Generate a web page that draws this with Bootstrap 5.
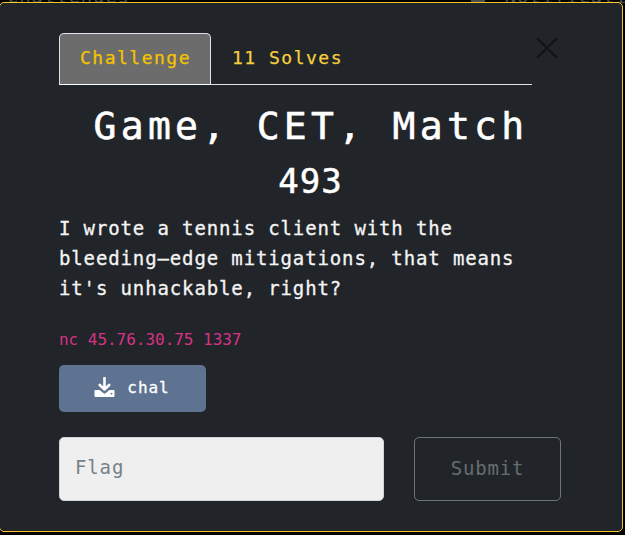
<!DOCTYPE html>
<html lang="en" data-bs-theme="dark">
<head>
<meta charset="utf-8">
<title>Game, CET, Match</title>
<link href="https://cdn.jsdelivr.net/npm/bootstrap@5.3.0/dist/css/bootstrap.min.css" rel="stylesheet">
<style>
html, body { height: 535px; overflow: hidden; }
body { background: #000; font-family: "DejaVu Sans Mono", "Liberation Mono", monospace; font-size: 19px; letter-spacing: .84px; color: #fff; }
.backdrop-text { left: 7px; right: 0; top: -12px; height: 16px; font-size: 19px; line-height: 16px; color: #4c4c4c; overflow: hidden; white-space: nowrap; z-index: -1; }
.backdrop-text .bell { width: 14px; height: 4px; margin: 10px 20px 0 341px; background: #4c4c4c; }
.challenge-panel { width: 624px; height: 530px; margin: 2px 0 0 -1px; background: #212529; border: 1px solid #f5c827; border-radius: 5px; padding: 30px 61px 0 59px; }
.tab-strip { width: 473px; height: 52px; border-bottom: 1px solid #dee2e6; }
.tab-strip .nav-link { height: 52px; padding: 0 20px; line-height: 48px; font-size: 18px; letter-spacing: 1.5px; color: #f5ce3e; border-radius: 5px 5px 0 0; -webkit-text-stroke: .25px; }
.tab-strip .nav-link.active { width: 152px; color: #f5c400; background: #6c6c6c; border-color: #dee2e6 #dee2e6 #fff; }
.close-x { margin: 4px 0 0 4px; width: 22px; height: 22px; }
.title { font-size: 38px; line-height: 48px; letter-spacing: 4.3px; margin: 17px 0 0 2px; white-space: nowrap; -webkit-text-stroke: .6px; }
.points { font-size: 34px; line-height: 42px; letter-spacing: 1px; margin: 10px 0 0 1px; -webkit-text-stroke: .5px; }
.desc { line-height: 30px; letter-spacing: .87px; margin: 11px 0 0; color: #f4f4f4; -webkit-text-stroke: .3px; }
.host { font-size: 16px; line-height: 24px; letter-spacing: -.03px; color: #d63384; margin-top: 25px; }
.btn-file { width: 147px; height: 47px; margin-top: 13px; background: #5e7291; border-radius: 5px; color: #fff; font-size: 16px; letter-spacing: .95px; padding: 0 1px 3px 0; }
.btn-file span { position: relative; top: 1px; -webkit-text-stroke: .3px; }
.flag-row { margin-top: 25px; gap: 30px; }
.flag-input, .flag-input:focus { width: 325px; height: 64px; background: #efefef; border: 1px solid #ced4da; border-radius: 5px; padding: 0 15px 4px; font-size: 19px; letter-spacing: .87px; color: #212529; }
.flag-input::placeholder { color: #77818a; }
.btn-send { width: 147px; height: 64px; border: 1px solid #6c757d; border-radius: 5px; color: #656d73; font-size: 19px; letter-spacing: .84px; padding: 0 0 2px; }
</style>
</head>
<body>
<div class="backdrop-text position-absolute d-flex" aria-hidden="true"><span>Challenges</span><span class="bell flex-shrink-0"></span><span>Notifications</span></div>
<main class="challenge-panel">
  <div class="d-flex">
    <ul class="nav nav-tabs tab-strip flex-nowrap flex-shrink-0">
      <li class="nav-item"><a class="nav-link active" href="#">Challenge</a></li>
      <li class="nav-item"><a class="nav-link" href="#">11 Solves</a></li>
    </ul>
    <svg class="close-x flex-shrink-0" viewBox="0 0 22 22" stroke="#111315" stroke-width="2.3" stroke-linecap="round"><path d="M2 2 20 20M20 2 2 20"/></svg>
  </div>
  <h2 class="title text-center mb-0">Game, CET, Match</h2>
  <h3 class="points text-center mb-0">493</h3>
  <p class="desc">I wrote a tennis client with the<br>bleeding–edge mitigations, that means<br>it's unhackable, right?</p>
  <div class="host">nc 45.76.30.75 1337</div>
  <a class="btn btn-file d-flex align-items-center justify-content-center" href="#">
    <svg class="me-2" width="21" height="21" viewBox="0 0 21 21"><path d="M1.500 13H6l2.800 2.600q1.700 1.500 3.400 0L15 13h4.500q1 0 1 1v5q0 1-1 1h-18q-1 0-1-1v-5q0-1 1-1z" fill="#fff"/><path d="M10.500 1v11M5.800 8l4.700 4.500L15.200 8" fill="none" stroke="#fff" stroke-width="2.600" stroke-linecap="round" stroke-linejoin="round"/><path d="M5.500 12.600 10.500 16.600l5-4" fill="none" stroke="#5e7291" stroke-width=".6"/><circle cx="17.500" cy="16.700" r=".9" fill="#5e7291"/></svg>
    <span class="ms-1">chal</span>
  </a>
  <form class="d-flex flag-row">
    <input class="form-control flag-input flex-shrink-0" type="text" placeholder="Flag" aria-label="Flag">
    <button class="btn btn-send flex-shrink-0" type="button">Submit</button>
  </form>
</main>
<script src="https://cdn.jsdelivr.net/npm/bootstrap@5.3.0/dist/js/bootstrap.bundle.min.js"></script>
</body>
</html>
